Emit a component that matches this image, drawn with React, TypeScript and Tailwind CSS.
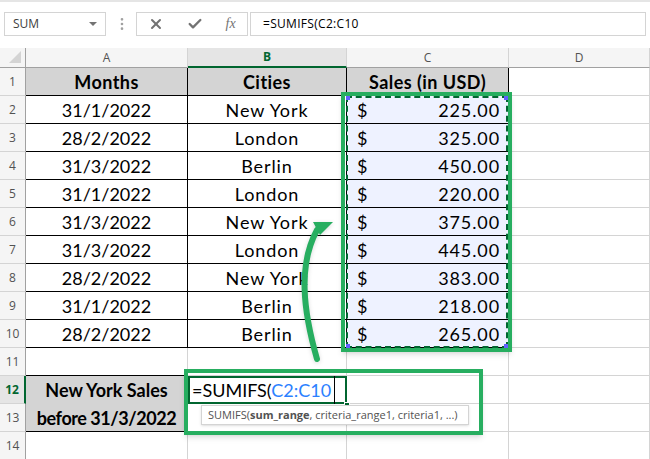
import { Check, EllipsisVertical, X } from 'lucide-react';

const rows = [
  ['31/1/2022', 'New York', '225.00'],
  ['28/2/2022', 'London', '325.00'],
  ['31/3/2022', 'Berlin', '450.00'],
  ['31/1/2022', 'London', '220.00'],
  ['31/3/2022', 'New York', '375.00'],
  ['31/3/2022', 'London', '445.00'],
  ['28/2/2022', 'New York', '383.00'],
  ['31/1/2022', 'Berlin', '218.00'],
  ['28/2/2022', 'Berlin', '265.00'],
];

const uiFont = { fontFamily: '"Open Sans", sans-serif' };

function RowNumber({ n, active }: { n: number; active?: boolean }) {
  return (
    <div
      style={uiFont}
      className={`flex items-center justify-center border-b border-r text-xs ${
        active
          ? 'border-r-2 border-b-neutral-300 border-r-green-800 bg-neutral-200 font-bold text-green-800'
          : 'border-b-neutral-300 border-r-neutral-400 bg-neutral-100 text-neutral-600'
      }`}
    >
      {n}
    </div>
  );
}

function Blank() {
  return <div className="border-b border-r border-neutral-300" />;
}

function GreenFrame({ className }: { className: string }) {
  return <div className={`pointer-events-none absolute border-4 border-[#27ae60] shadow-md ${className}`} />;
}

function Corner({ className }: { className: string }) {
  return <div className={`absolute h-1 w-1 bg-indigo-500 ${className}`} />;
}

export default function App() {
  return (
    <div className="relative h-screen w-screen overflow-hidden bg-white text-lg text-black" style={{ fontFamily: 'Lato, sans-serif' }}>
      {/* formula bar */}
      <div className="flex h-12 items-start border-t-2 border-neutral-200 px-1 pt-2.5">
        <div style={uiFont} className="flex h-6 w-[102px] items-center justify-between border border-neutral-300 px-2 text-xs text-neutral-700">
          SUM
          <span className="h-0 w-0 border-x-4 border-t-4 border-x-transparent border-t-neutral-500" />
        </div>
        <div className="ml-0.5 flex h-6 w-7 items-center justify-center text-neutral-400">
          <EllipsisVertical className="h-4 w-4" />
        </div>
        <div className="flex h-6 w-28 items-center justify-around border border-neutral-300 text-neutral-500">
          <X className="h-4 w-4" strokeWidth={3} />
          <Check className="h-4 w-4" strokeWidth={3.5} />
          <span className="text-sm italic" style={{ fontFamily: '"Liberation Serif", serif' }}>fx</span>
        </div>
        <div style={uiFont} className="ml-0.5 flex h-6 flex-1 items-center border border-neutral-300 px-3 text-xs tracking-wide text-black">
          =SUMIFS(C2:C10
        </div>
      </div>

      {/* sheet */}
      <div className="grid grid-cols-[26px_162px_159px_162px_1fr] grid-rows-[20px_repeat(14,28px)]">
        <div className="flex items-end justify-end border-b border-r border-neutral-400 bg-neutral-100 p-1">
          <span className="h-0 w-0 border-b-[12px] border-l-[12px] border-b-neutral-300 border-l-transparent" />
        </div>
        {['A', 'B', 'C', 'D'].map((c) => (
          <div
            key={c}
            style={uiFont}
            className={`flex items-center justify-center border-r text-xs ${
              c === 'B'
                ? 'border-b-2 border-b-green-800 border-r-neutral-300 bg-neutral-200 font-bold text-green-800'
                : 'border-b border-b-neutral-400 border-r-neutral-300 bg-neutral-100 text-neutral-600'
            }`}
          >
            {c}
          </div>
        ))}

        <RowNumber n={1} />
        {['Months', 'Cities', 'Sales (in USD)'].map((h) => (
          <div key={h} className="flex items-center justify-center border-b border-r border-black bg-neutral-300 font-bold tracking-wide">
            {h}
          </div>
        ))}
        <Blank />

        {rows.map(([date, city, sales], i) => (
          <div key={i} className="contents">
            <RowNumber n={i + 2} />
            <div className="flex items-center justify-center border-b border-r border-black">{date}</div>
            <div className="flex items-center justify-center border-b border-r border-black tracking-wider">{city}</div>
            <div className="flex items-center justify-between border-b border-r border-black bg-indigo-50 pl-2.5 pr-2">
              <span>$</span>
              <span className="tracking-wider">{sales}</span>
            </div>
            <Blank />
          </div>
        ))}

        <RowNumber n={11} />
        <div className="border-b border-r border-b-black border-r-neutral-300" />
        <Blank />
        <Blank />
        <Blank />

        <RowNumber n={12} active />
        <div className="row-span-2 flex flex-col items-center justify-center gap-1 border-b border-r border-black bg-neutral-300 font-bold leading-6">
          <span>New York Sales</span>
          <span className="tracking-tight">before 31/3/2022</span>
        </div>
        <div className="border-2 border-green-800 pl-0.5 leading-6">
          =SUMIFS(<span className="text-blue-500">C2:C10</span>
        </div>
        <Blank />
        <Blank />

        <RowNumber n={13} />
        <Blank />
        <Blank />
        <Blank />

        <RowNumber n={14} />
        <Blank />
        <Blank />
        <Blank />
        <Blank />
      </div>

      {/* overlays */}
      <div className="pointer-events-none absolute left-[346px] top-24 h-[252px] w-[162px] border-2 border-dashed border-green-800" />
      <Corner className="left-[346px] top-24" />
      <Corner className="left-[504px] top-24" />
      <Corner className="left-[346px] top-[344px]" />
      <Corner className="left-[504px] top-[344px]" />
      <GreenFrame className="left-[341px] top-[92px] h-[260px] w-[171px]" />
      <GreenFrame className="left-[184px] top-[369px] h-[66px] w-[299px]" />

      <div className="absolute left-[334px] top-[376px] h-7 w-px bg-black" />
      <div className="absolute left-[344px] top-[402px] h-1.5 w-1.5 border border-white bg-green-800" />

      <div
        style={uiFont}
        className="absolute left-[201px] top-[405px] flex h-5 w-[268px] items-center whitespace-nowrap border border-neutral-300 bg-white px-1.5 text-[11px] text-neutral-600 shadow-sm"
      >
        SUMIFS(<b>sum_range</b>, criteria_range1, criteria1, ...)
      </div>

      <svg className="absolute left-[295px] top-[215px] h-[150px] w-[45px] drop-shadow-sm" viewBox="0 0 45 150" fill="none">
        <path d="M22 144C8 95 3 50 22 15" stroke="#27ae60" strokeWidth="6" strokeLinecap="round" />
        <path d="M38 7H18L25 20Z" fill="#27ae60" />
      </svg>
    </div>
  );
}
